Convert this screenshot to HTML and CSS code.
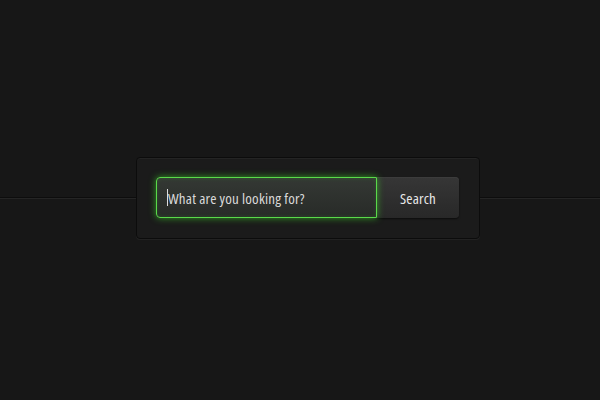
FILE: index.html
```html
<!DOCTYPE html>
<html lang="en">
<head>
    <meta charset="UTF-8">
    <title>Search</title>
    <link rel="stylesheet" href="styles.css">
</head>
<body>
<div class="stage">
    <form class="search-box">
        <div class="search-field">
            <span class="caret"></span>
            <input type="text" class="search-input" placeholder="What are you looking for?">
        </div>
        <button type="button" class="search-btn">Search</button>
    </form>
</div>
</body>
</html>
```

FILE: styles.css
```css
html, body {
    margin: 0;
    height: 100%;
}

body {
    background-color: #171717;
    font-family: "Open Sans", sans-serif;
}

.stage {
    height: 400px;
    display: flex;
    align-items: center;
    justify-content: center;
    background: linear-gradient(to bottom,
        transparent 197px,
        #0d0d0d 197px, #0d0d0d 198px,
        #252525 198px, #252525 199px,
        transparent 199px);
}

.search-box {
    margin: 0 0 4px 16px;
    display: flex;
    padding: 19px 20px 20px 19px;
    background: #1b1b1b;
    border: 1px solid #0c0c0c;
    border-radius: 4px;
    box-shadow: inset 0 1px 0 #242424, 0 1px 0 #222;
}

.search-field {
    position: relative;
    width: 221px;
    height: 41px;
}

.search-input {
    box-sizing: border-box;
    width: 100%;
    height: 100%;
    margin: 0;
    padding: 0 11px;
    border: 1px solid #5ada4a;
    border-radius: 4px 0 0 4px;
    background: linear-gradient(to bottom, #343834, #282b28);
    box-shadow: 0 0 7px rgba(60, 210, 40, 0.7), inset 0 0 4px rgba(60, 210, 40, 0.2);
    font-family: "Open Sans", sans-serif;
    font-stretch: 75%;
    font-size: 15px;
    letter-spacing: 0.2px;
    color: #ddd;
    outline: none;
}

.search-input::placeholder {
    color: #dadada;
}

.caret {
    position: absolute;
    left: 11px;
    top: 12px;
    width: 1px;
    height: 17px;
    background: #ddd;
}

.search-btn {
    width: 82px;
    height: 41px;
    margin: 0;
    border: none;
    border-radius: 0 4px 4px 0;
    background: linear-gradient(to bottom, #363636, #282828);
    box-shadow: 0 1px 2px rgba(0, 0, 0, 0.6), inset 0 1px 0 #3c3c3c;
    font-family: "Open Sans", sans-serif;
    font-stretch: 75%;
    font-size: 15px;
    letter-spacing: 0.2px;
    color: #e8e8e8;
    cursor: pointer;
}
```
